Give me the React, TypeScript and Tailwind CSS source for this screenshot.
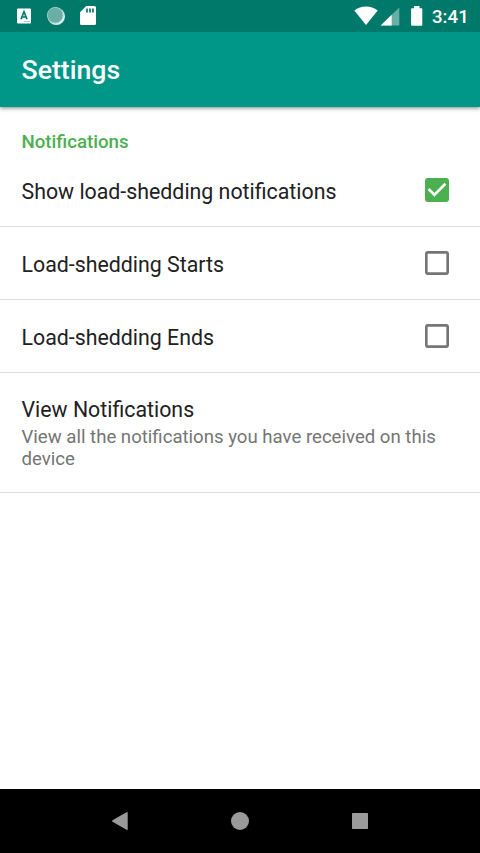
import React from "react";

function Check({ on }: { on?: boolean }) {
  return (
    <svg width="32" height="32" viewBox="0 0 24 24" className={on ? "mb-px text-[#4caf50]" : "text-[#757575]"} fill="currentColor">
      {on ? (
        <path d="M19 3H5c-1.11 0-2 .9-2 2v14c0 1.1.89 2 2 2h14c1.11 0 2-.9 2-2V5c0-1.100-.89-2-2-2zm-9 14l-5-5 1.410-1.410L10 14.170l7.590-7.590L19 8l-9 9z" />
      ) : (
        <path d="M19 5v14H5V5h14m0-2H5c-1.100 0-2 .9-2 2v14c0 1.100.9 2 2 2h14c1.100 0 2-.9 2-2V5c0-1.100-.9-2-2-2z" />
      )}
    </svg>
  );
}

function Row({ label, on, first }: { label: string; on?: boolean; first?: boolean }) {
  return (
    <div className={`flex items-center justify-between border-b border-[#dedede] pl-[21.5px] pr-[26.6px] ${first ? "h-[72px]" : "h-[73px]"}`}>
      <span className="pt-[3px] text-[21.33px] leading-7 text-[#212121]">{label}</span>
      <Check on={on} />
    </div>
  );
}

export default function App() {
  return (
    <div className="flex h-[853px] w-[480px] flex-col overflow-hidden bg-white font-['Roboto',sans-serif]">
      <div className="z-20 flex h-8 shrink-0 items-center bg-[#00796b] text-white">
        <svg width="432" height="32" viewBox="0 0 432 32" fill="white" className="shrink-0">
          <rect x="17" y="8.500" width="14" height="15" rx="1" />
          <path d="M21 19.200l3-7.500 3 7.500M22 17h4" stroke="#00796b" strokeWidth="1.700" fill="none" />
          <path d="M24.500 21.500h5" stroke="#00796b" strokeOpacity=".6" strokeWidth="1" strokeDasharray="1.200 .7" />
          <circle cx="56.300" cy="16.300" r="8.700" fill="#d9efec" />
          <circle cx="55.200" cy="15.200" r="7.800" fill="#69afa5" stroke="#9accc5" strokeWidth="1" />
          <path d="M86.200 6h8.300a1.500 1.500 0 0 1 1.500 1.500v16a1.500 1.500 0 0 1-1.500 1.500h-13a1.500 1.500 0 0 1-1.500-1.500V12.300z" />
          <path d="M87 8.500v4M90 8.500v4M93 8.500v4" stroke="#00796b" strokeWidth="1.700" />
          <path d="M366 25L354.300 10.500C361 5 371 5 377.700 10.500z" />
          <path d="M399.300 7.500v18h-18.600z" fillOpacity=".4" />
          <path d="M391.700 14.800v10.700h-11z" />
          <path d="M414 6h5.500v2.200h2q.8 0 .8.8v16q0 .8-.8.8h-9.600q-.8 0-.8-.8V9q0-.8.8-.8h2.100z" />
        </svg>
        <span className="pt-px text-[18.67px] leading-6 font-medium">3:41</span>
      </div>
      <header className="z-10 flex h-[75px] shrink-0 items-center bg-[#009688] pl-[21.5px] shadow-[0_1px_4px_rgba(0,0,0,0.5)]">
        <h1 className="text-[26.67px] font-medium text-white">Settings</h1>
      </header>
      <main className="flex-1">
        <div className="h-[48px] pl-[21.5px] pt-[23px] text-[18.67px] font-medium leading-6 text-[#4caf50]">Notifications</div>
        <Row label="Show load-shedding notifications" on first />
        <Row label="Load-shedding Starts" />
        <Row label="Load-shedding Ends" />
        <div className="h-[120px] border-b border-[#dedede] pl-[21.5px] pr-[27px] pt-[23px]">
          <div className="text-[21.33px] leading-7 text-[#212121]">View Notifications</div>
          <div className="pt-[2px] text-[18.6px] leading-[22px] text-[#757575]">View all the notifications you have received on this device</div>
        </div>
      </main>
      <nav className="flex h-16 shrink-0 items-center bg-black">
        <svg width="480" height="64" viewBox="0 0 480 64" fill="#9a9a9a">
          <path d="M112.500 31.200l14-8q1.200-.6 1.200.7v16.200q0 1.300-1.200.7l-14-8q-1-.8 0-1.600z" />
          <circle cx="240" cy="32" r="9" />
          <rect x="352" y="24" width="16" height="16" rx=".7" />
        </svg>
      </nav>
    </div>
  );
}
